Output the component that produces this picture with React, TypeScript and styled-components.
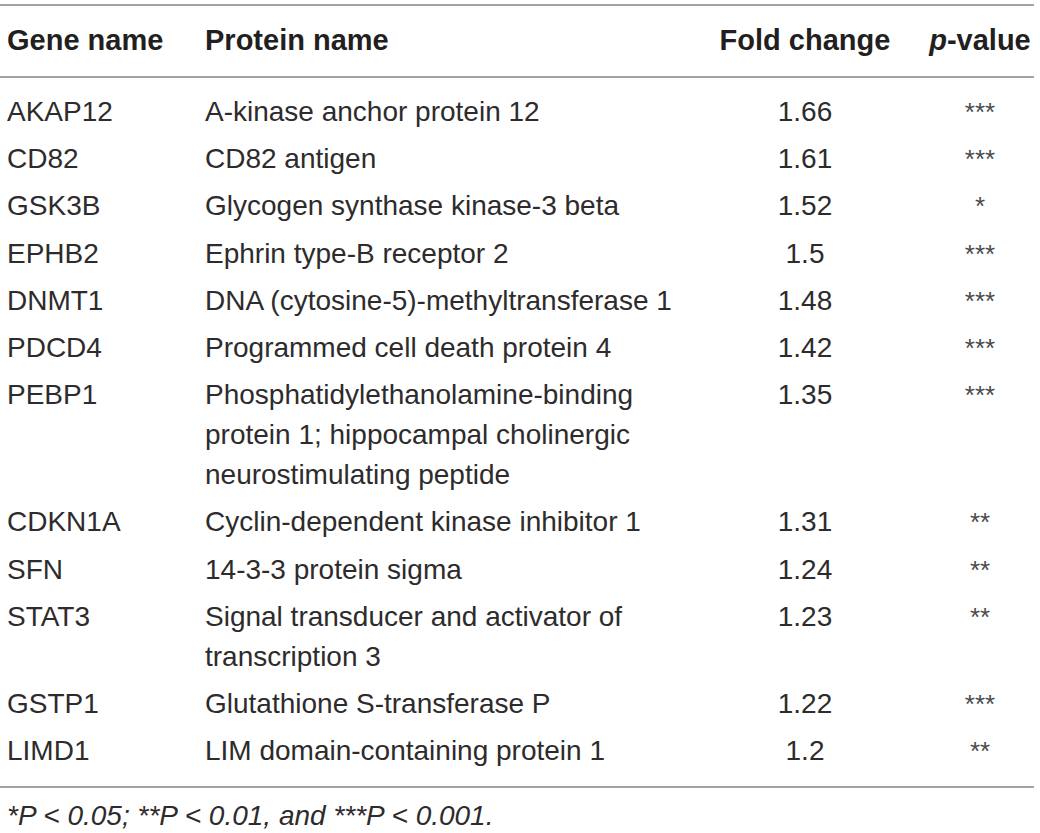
import React from "react";
import styled, { createGlobalStyle } from "styled-components";

const GlobalStyle = createGlobalStyle`
  html, body {
    margin: 0;
    padding: 0;
    background: #ffffff;
  }
  body {
    font-family: "Liberation Sans", Arial, Helvetica, sans-serif;
    color: #231f20;
  }
`;

const Page = styled.div`
  padding-top: 4px;
  width: 1034px;
`;

const Table = styled.table`
  width: 1034px;
  table-layout: fixed;
  border-collapse: collapse;
  font-size: 28px;
  line-height: 40px;
  border-top: 2px solid #a3a3a3;
  border-bottom: 2px solid #a3a3a3;
`;

const Head = styled.thead`
  border-bottom: 2px solid #a3a3a3;
`;

const HeadCell = styled.th<{ $align?: "left" | "center"; $first?: boolean }>`
  font-weight: 700;
  font-size: 29px;
  text-align: ${(p) => p.$align ?? "left"};
  padding: 14px 0 16px ${(p) => (p.$first ? "7px" : "0")};
  vertical-align: top;
  color: #231f20;
`;

const Row = styled.tr<{ $first?: boolean; $last?: boolean }>`
  & > td {
    padding-top: ${(p) => (p.$first ? "14px" : "3.6px")};
    padding-bottom: ${(p) => (p.$last ? "15px" : "3.6px")};
  }
`;

const Cell = styled.td<{ $align?: "left" | "center"; $first?: boolean }>`
  font-weight: 400;
  text-align: ${(p) => p.$align ?? "left"};
  vertical-align: top;
  padding-left: ${(p) => (p.$first ? "7px" : "0")};
  padding-right: 0;
  color: #2e2b2c;
`;

const Stars = styled.span`
  color: #4a4a4a;
  font-size: 26px;
`;

const Footnote = styled.p`
  margin: 8px 0 0 7px;
  font-size: 28px;
  line-height: 40px;
  font-style: italic;
  color: #2e2b2c;
`;

type Item = { gene: string; protein: string; fold: string; p: string };

const rows: Item[] = [
  { gene: "AKAP12", protein: "A-kinase anchor protein 12", fold: "1.66", p: "***" },
  { gene: "CD82", protein: "CD82 antigen", fold: "1.61", p: "***" },
  { gene: "GSK3B", protein: "Glycogen synthase kinase-3 beta", fold: "1.52", p: "*" },
  { gene: "EPHB2", protein: "Ephrin type-B receptor 2", fold: "1.5", p: "***" },
  { gene: "DNMT1", protein: "DNA (cytosine-5)-methyltransferase 1", fold: "1.48", p: "***" },
  { gene: "PDCD4", protein: "Programmed cell death protein 4", fold: "1.42", p: "***" },
  {
    gene: "PEBP1",
    protein:
      "Phosphatidylethanolamine-binding protein 1; hippocampal cholinergic neurostimulating peptide",
    fold: "1.35",
    p: "***",
  },
  { gene: "CDKN1A", protein: "Cyclin-dependent kinase inhibitor 1", fold: "1.31", p: "**" },
  { gene: "SFN", protein: "14-3-3 protein sigma", fold: "1.24", p: "**" },
  { gene: "STAT3", protein: "Signal transducer and activator of transcription 3", fold: "1.23", p: "**" },
  { gene: "GSTP1", protein: "Glutathione S-transferase P", fold: "1.22", p: "***" },
  { gene: "LIMD1", protein: "LIM domain-containing protein 1", fold: "1.2", p: "**" },
];

export default function App() {
  return (
    <Page>
      <GlobalStyle />
      <Table>
        <colgroup>
          <col style={{ width: 205 }} />
          <col style={{ width: 479 }} />
          <col style={{ width: 242 }} />
          <col style={{ width: 108 }} />
        </colgroup>
        <Head>
          <tr>
            <HeadCell $first>Gene name</HeadCell>
            <HeadCell>Protein name</HeadCell>
            <HeadCell $align="center">Fold change</HeadCell>
            <HeadCell $align="center">
              <i>p</i>-value
            </HeadCell>
          </tr>
        </Head>
        <tbody>
          {rows.map((r, i) => (
            <Row key={r.gene} $first={i === 0} $last={i === rows.length - 1}>
              <Cell $first>{r.gene}</Cell>
              <Cell>{r.protein}</Cell>
              <Cell $align="center">{r.fold}</Cell>
              <Cell $align="center">
                <Stars>{r.p}</Stars>
              </Cell>
            </Row>
          ))}
        </tbody>
      </Table>
      <Footnote>*P &lt; 0.05; **P &lt; 0.01, and ***P &lt; 0.001.</Footnote>
    </Page>
  );
}
